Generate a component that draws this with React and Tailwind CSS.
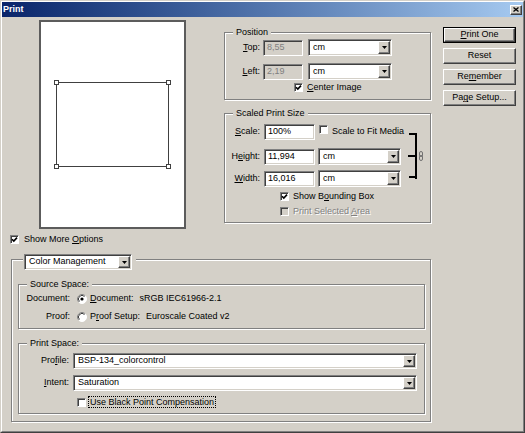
import React from "react";

// win2000 style bevels
const sunken =
  "border border-t-[#808080] border-l-[#808080] border-r-white border-b-white shadow-[inset_1px_1px_0_#404040,inset_-1px_-1px_0_#d4d0c8]";
const raised =
  "border border-t-white border-l-white border-r-[#404040] border-b-[#404040] shadow-[inset_-1px_-1px_0_#808080]";
const etched = "border border-[#808080] shadow-[inset_1px_1px_0_#fff,1px_1px_0_#fff]";
const greyText = "text-[#808080] [text-shadow:1px_1px_0_#fff]";

const Arrow = () => (
  <svg width="5" height="3" viewBox="0 0 5 3">
    <path d="M0 0H5L2.5 3z" fill="#000" />
  </svg>
);

const Select = ({ value, className }) => (
  <div className={`flex bg-white p-[1px] ${sunken} ${className}`}>
    <span className="flex-1 flex items-center pl-[3px] whitespace-nowrap overflow-hidden">{value}</span>
    <span className={`w-[12px] bg-[#d4d0c8] flex items-center justify-center ${raised}`}>
      <Arrow />
    </span>
  </div>
);

const Input = ({ value, disabled, className }) => (
  <div
    className={`flex items-center pl-[3px] ${sunken} ${disabled ? "bg-[#d4d0c8] text-[#808080]" : "bg-white"} ${className}`}
  >
    {value}
  </div>
);

const Checkbox = ({ checked, disabled }) => (
  <span
    className={`inline-flex shrink-0 w-[9px] h-[9px] items-center justify-center border border-t-[#808080] border-l-[#808080] border-r-white border-b-white shadow-[inset_1px_1px_0_#404040] ${disabled ? "bg-[#d4d0c8]" : "bg-white"}`}
  >
    {checked && (
      <svg width="7" height="7" viewBox="0 0 7 7">
        <path d="M1 3.2L2.8 5L6 1.6" fill="none" stroke="#000" strokeWidth="1.6" />
      </svg>
    )}
  </span>
);

const Radio = ({ checked }) => (
  <svg width="10" height="10" viewBox="0 0 10 10" className="shrink-0">
    <circle cx="5" cy="5" r="4.5" fill="#fff" />
    <path d="M1.8 8.2A4.5 4.5 0 0 1 8.2 1.8" fill="none" stroke="#808080" />
    <path d="M2.5 7.5A3.5 3.5 0 0 1 7.5 2.5" fill="none" stroke="#404040" />
    <path d="M8.2 1.8A4.5 4.5 0 0 1 1.8 8.2" fill="none" stroke="#fff" />
    {checked && <circle cx="5" cy="5" r="1.6" fill="#000" />}
  </svg>
);

const Group = ({ label, className, children }) => (
  <div className={`relative ${etched} ${className}`}>
    <span className="absolute top-[-7px] left-[8px] px-[3px] leading-[12px] bg-[#d4d0c8] whitespace-nowrap">
      {label}
    </span>
    {children}
  </div>
);

const Button = ({ children, isDefault }) =>
  isDefault ? (
    <div className="w-[73px] h-[16px] border border-black">
      <div className={`h-full flex items-center justify-center ${raised}`}>{children}</div>
    </div>
  ) : (
    <div className={`w-[73px] h-[16px] flex items-center justify-center ${raised}`}>{children}</div>
  );

const Preview = () => {
  const x = 15.5, y = 60.5, w = 112, h = 84;
  const corners = [
    [x, y],
    [x + w, y],
    [x, y + h],
    [x + w, y + h],
  ];
  return (
    <div className="ml-[37px] mt-[3px] w-[147px] h-[209px] border-2 border-[#5c5c5c] bg-white">
      <svg width="143" height="205">
        <rect x={x} y={y} width={w} height={h} fill="none" stroke="#404040" />
        {corners.map(([cx, cy], i) => (
          <rect key={i} x={cx - 2} y={cy - 2} width="4" height="4" fill="#fff" stroke="#404040" />
        ))}
      </svg>
    </div>
  );
};

export default function App() {
  return (
    <div className="w-[525px] h-[433px] border border-t-[#d4d0c8] border-l-[#d4d0c8] border-r-[#404040] border-b-[#404040] font-['Liberation_Sans',Arial,sans-serif] text-[9px] text-black">
      <div className="h-full flex flex-col bg-[#d4d0c8] border border-t-white border-l-white border-r-[#808080] border-b-[#808080]">
        {/* title bar */}
        <div className="h-[15px] flex items-center bg-linear-to-r from-[#0a246a] to-[#a6caf0]">
          <span className="pl-[1px] font-bold text-white text-[9px]">Print</span>
          <span className={`ml-auto mr-[1px] w-[12px] h-[10px] bg-[#d4d0c8] flex items-center justify-center ${raised}`}>
            <svg width="6" height="5" viewBox="0 0 6 5">
              <path d="M0.5 0.5L5.5 4.5M5.5 0.5L0.5 4.5" stroke="#000" strokeWidth="1.3" />
            </svg>
          </span>
        </div>

        <div className="flex">
          <div className="w-[429px] flex flex-col">
            <div className="flex items-start">
              <Preview />

              <div className="ml-[38px] mt-[15px] w-[207px] flex flex-col">
                <Group label="Position" className="h-[68px] pt-[6px]">
                  <div className="h-[17px] flex items-center">
                    <span className="w-[38px] pr-[3px] text-right">
                      <u>T</u>op:
                    </span>
                    <Input value="8,55" disabled className="w-[40px] h-[16px]" />
                    <Select value="cm" className="ml-[5px] w-[84px] h-[17px]" />
                  </div>
                  <div className="mt-[7px] h-[17px] flex items-center">
                    <span className="w-[38px] pr-[3px] text-right">
                      <u>L</u>eft:
                    </span>
                    <Input value="2,19" disabled className="w-[40px] h-[16px]" />
                    <Select value="cm" className="ml-[5px] w-[84px] h-[17px]" />
                  </div>
                  <div className="mt-[2px] ml-[69px] h-[11px] flex items-center gap-[4px]">
                    <Checkbox checked />
                    <span>
                      <u>C</u>enter Image
                    </span>
                  </div>
                </Group>

                <Group label="Scaled Print Size" className="mt-[13px] h-[110px] pt-[10px]">
                  <div className="h-[16px] flex items-center">
                    <span className="w-[39px] pr-[4px] text-right">
                      <u>S</u>cale:
                    </span>
                    <Input value="100%" className="w-[51px] h-[16px]" />
                    <span className="ml-[4px]">
                      <Checkbox />
                    </span>
                    <span className="ml-[4px]">Scale to Fit Media</span>
                  </div>
                  <div className="mt-[8px] h-[17px] flex items-center">
                    <span className="w-[39px] pr-[4px] text-right">
                      H<u>e</u>ight:
                    </span>
                    <Input value="11,994" className="w-[51px] h-[16px]" />
                    <Select value="cm" className="ml-[3px] w-[83px] h-[17px]" />
                  </div>
                  <div className="mt-[5px] h-[17px] flex items-center">
                    <span className="w-[39px] pr-[4px] text-right">
                      <u>W</u>idth:
                    </span>
                    <Input value="16,016" className="w-[51px] h-[16px]" />
                    <Select value="cm" className="ml-[3px] w-[83px] h-[17px]" />
                  </div>
                  <div className="mt-[4px] ml-[55px] h-[11px] flex items-center gap-[4px]">
                    <Checkbox checked />
                    <span>
                      Show B<u>o</u>unding Box
                    </span>
                  </div>
                  <div className="mt-[4px] ml-[55px] h-[11px] flex items-center gap-[4px]">
                    <Checkbox disabled />
                    <span className={greyText}>
                      Print Selected <u>A</u>rea
                    </span>
                  </div>

                  {/* proportion link bracket */}
                  <svg width="16" height="46" className="absolute left-[183px] top-[19px]">
                    <path d="M1 1H9M8 0V46M1 44H9M0 23H8" fill="none" stroke="#000" strokeWidth="2" />
                    <rect x="11.5" y="18.5" width="3" height="5" rx="1.5" fill="none" stroke="#707070" />
                    <rect x="11.5" y="22.5" width="3" height="5" rx="1.5" fill="none" stroke="#707070" />
                  </svg>
                </Group>
              </div>
            </div>

            <div className="mt-[5px] ml-[8px] h-[11px] flex items-center gap-[5px]">
              <Checkbox checked />
              <span>
                Show More <u>O</u>ptions
              </span>
            </div>

            <div className={`relative mt-[14px] ml-[9px] w-[420px] h-[163px] ${etched}`}>
              <div className="absolute top-[-6px] left-[11px] pl-[1px] pr-[4px] bg-[#d4d0c8]">
                <Select value="Color Management" className="w-[108px] h-[16px]" />
              </div>

              <Group label="Source Space:" className="mt-[24px] ml-[6px] w-[407px] h-[45px] pt-[7px]">
                <div className="h-[13px] flex items-center">
                  <span className="w-[51px] text-right">Document:</span>
                  <span className="ml-[7px] flex">
                    <Radio checked />
                  </span>
                  <span className="ml-[3px]">
                    <u>D</u>ocument:
                  </span>
                  <span className="ml-[6px]">sRGB IEC61966-2.1</span>
                </div>
                <div className="mt-[5px] h-[13px] flex items-center">
                  <span className="w-[51px] text-right">Proof:</span>
                  <span className="ml-[7px] flex">
                    <Radio />
                  </span>
                  <span className="ml-[3px]">
                    P<u>r</u>oof Setup:
                  </span>
                  <span className="ml-[6px]">Euroscale Coated v2</span>
                </div>
              </Group>

              <Group label="Print Space:" className="mt-[14px] ml-[6px] w-[407px] h-[71px] pt-[9px]">
                <div className="h-[16px] flex items-center">
                  <span className="w-[54px] pr-[4px] text-right">
                    Pro<u>f</u>ile:
                  </span>
                  <Select value="BSP-134_colorcontrol" className="w-[344px] h-[16px]" />
                </div>
                <div className="mt-[6px] h-[16px] flex items-center">
                  <span className="w-[54px] pr-[4px] text-right">
                    <u>I</u>ntent:
                  </span>
                  <Select value="Saturation" className="w-[344px] h-[16px]" />
                </div>
                <div className="mt-[5px] ml-[58px] h-[12px] flex items-center gap-[2px]">
                  <Checkbox />
                  <span className="px-[1px] border border-dotted border-black leading-[10px]">
                    Use Black Point Compensation
                  </span>
                </div>
              </Group>
            </div>
          </div>

          <div className="ml-[12px] mt-[10px] flex flex-col gap-[5px]">
            <Button isDefault>
              <span>
                <u>P</u>rint One
              </span>
            </Button>
            <Button>Reset</Button>
            <Button>
              <span>
                Re<u>m</u>ember
              </span>
            </Button>
            <Button>
              <span>
                Pa<u>g</u>e Setup...
              </span>
            </Button>
          </div>
        </div>
      </div>
    </div>
  );
}
